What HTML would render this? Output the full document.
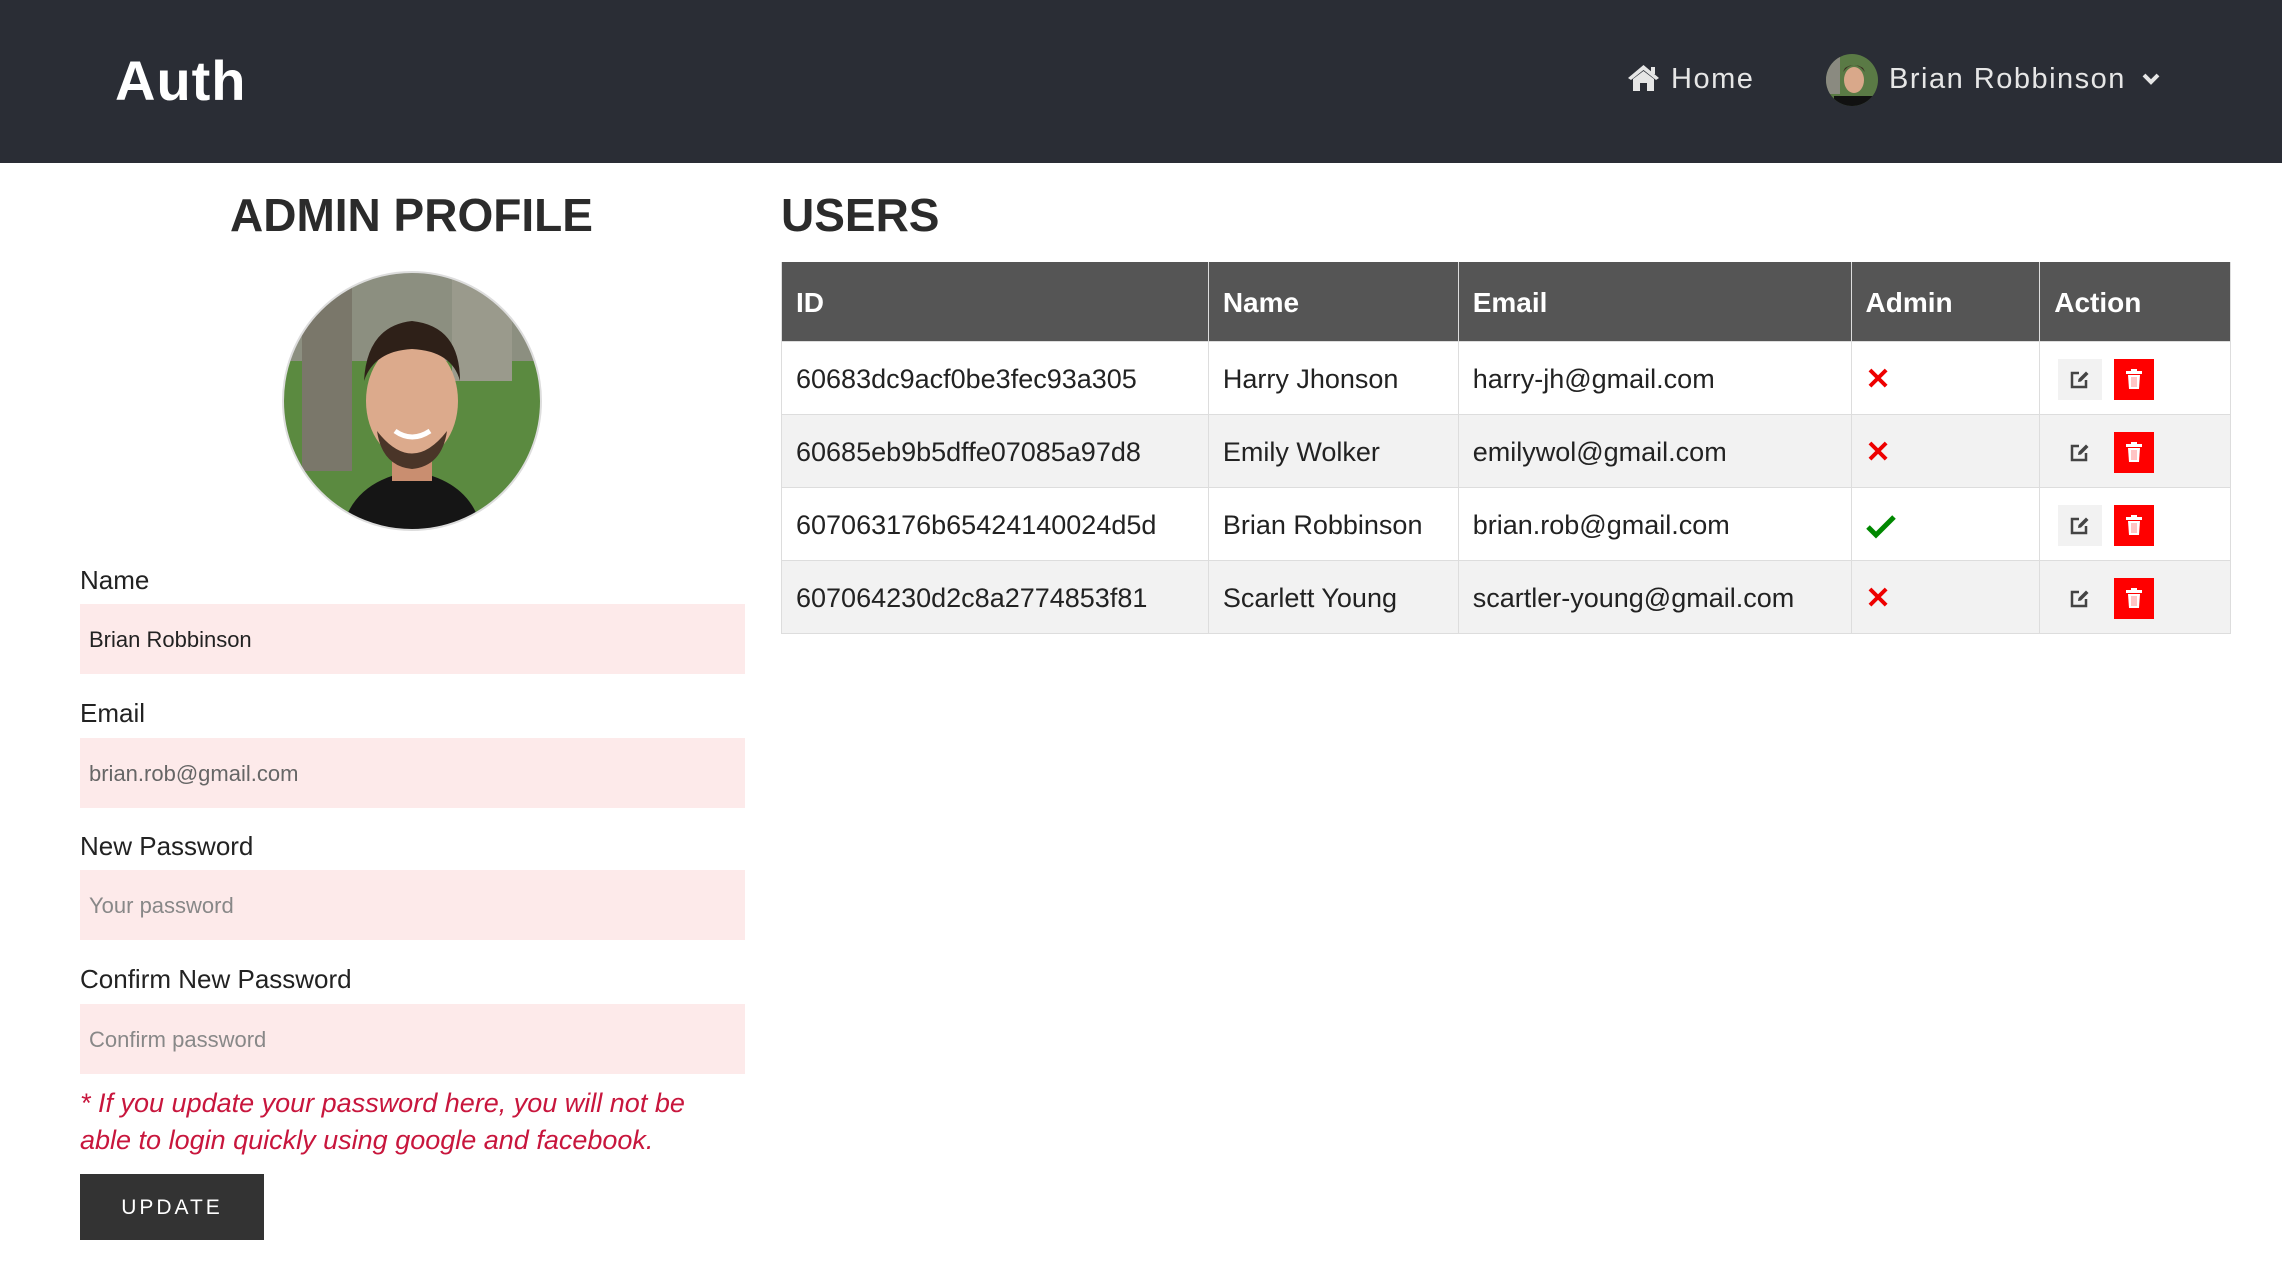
<!DOCTYPE html>
<html><head><meta charset="utf-8"><style>
*{box-sizing:border-box;margin:0;padding:0}
body{width:2282px;height:1269px;background:#fff;font-family:"Liberation Sans",sans-serif;color:#222;position:relative;overflow:hidden}
.nav{position:absolute;left:0;top:0;width:2282px;height:163px;background:#2a2d35}
.abs{position:absolute;white-space:nowrap}
.logo{left:115px;top:48px;font-size:56px;font-weight:bold;color:#fff;letter-spacing:1px}
.navt{color:#e6e6e6;font-size:29px;letter-spacing:1.5px;top:63px}
h2{position:absolute;font-size:46px;font-weight:bold;color:#2b2b2b;top:188px}
label{position:absolute;left:80px;font-size:26px;color:#222}
.inp{position:absolute;left:80px;width:665px;height:70px;background:#fdeaea;font-size:22px;padding-left:9px;line-height:72px;color:#777}
.note{position:absolute;left:80px;top:1085px;font-size:27px;font-style:italic;color:#c8163d;line-height:37px;width:640px}
.btn{position:absolute;left:80px;top:1174px;width:184px;height:66px;background:#333;color:#fff;font-size:21px;letter-spacing:3px;text-align:center;line-height:68px}
table{position:absolute;left:781px;top:262px;width:1450px;border-collapse:collapse;font-size:27px}
th{background:#555;color:#fff;text-align:left;height:79px;padding:4px 14px 0;font-size:28px;border:1px solid #ddd;border-top:none}
td{height:73px;padding:4px 14px 0;border:1px solid #ddd;white-space:nowrap}
tr:nth-child(odd) td{background:#f2f2f2}
.e{display:inline-block;width:44px;height:41px;background:#f2f2f2;vertical-align:middle;margin-left:4px;position:relative}
.d{display:inline-block;width:40px;height:41px;background:#f00;vertical-align:middle;margin-left:12px;position:relative}
</style></head><body>
<div class="nav"></div>
<div class="abs logo">Auth</div>
<svg class="abs" style="left:1627px;top:64px" width="33" height="28" viewBox="0 0 33 28"><path d="M16.5 1 L1 14 L4 16 L16.5 6 L29 16 L32 14 Z" fill="#e6e6e6"/><path d="M6 15 L16.5 7 L27 15 V27 H20 V19 H13 V27 H6 Z" fill="#e6e6e6"/><rect x="24" y="3" width="4" height="7" fill="#e6e6e6"/></svg>
<div class="abs navt" style="left:1671px">Home</div>
<svg class="abs" style="left:1826px;top:54px" width="52" height="52" viewBox="0 0 52 52"><defs><clipPath id="c1"><circle cx="26" cy="26" r="26"/></clipPath></defs><g clip-path="url(#c1)"><rect width="52" height="52" fill="#5a7a45"/><rect x="0" y="0" width="14" height="40" fill="#8a8a80"/><ellipse cx="28" cy="26" rx="10" ry="13" fill="#d9a88a"/><path d="M17 18 Q28 4 39 18 L37 14 Q28 8 19 14Z" fill="#3a2a20"/><rect x="8" y="42" width="40" height="12" fill="#111"/></g></svg>
<div class="abs navt" style="left:1889px">Brian Robbinson</div>
<svg class="abs" style="left:2142px;top:72px" width="18" height="14" viewBox="0 0 18 14"><path d="M2 3 L9 10 L16 3" stroke="#e6e6e6" stroke-width="4" fill="none"/></svg>

<h2 style="left:230px">ADMIN PROFILE</h2>
<h2 style="left:781px">USERS</h2>
<svg class="abs" style="left:282px;top:271px" width="260" height="260" viewBox="0 0 260 260"><defs><clipPath id="c2"><circle cx="130" cy="130" r="129"/></clipPath></defs><g clip-path="url(#c2)"><rect width="260" height="260" fill="#5b8a40"/><rect width="260" height="90" fill="#8c8f80"/><rect x="20" y="0" width="50" height="200" fill="#7a776a"/><rect x="170" y="0" width="60" height="110" fill="#9a9a8c"/><path d="M60 260 Q70 210 130 200 Q190 210 200 260Z" fill="#151515"/><rect x="110" y="170" width="40" height="40" fill="#c98e70"/><ellipse cx="130" cy="130" rx="46" ry="60" fill="#dcaa8c"/><path d="M82 110 Q85 55 130 50 Q178 55 178 110 Q170 80 130 78 Q92 80 82 110Z" fill="#2e2018"/><path d="M95 160 Q130 205 165 160 Q160 195 130 198 Q100 195 95 160Z" fill="#4a3528"/><path d="M113 160 Q130 172 148 160" stroke="#fff" stroke-width="5" fill="none"/></g><circle cx="130" cy="130" r="129" fill="none" stroke="#ddd" stroke-width="2"/></svg>

<label style="top:565px">Name</label>
<div class="inp" style="top:604px;color:#222">Brian Robbinson</div>
<label style="top:698px">Email</label>
<div class="inp" style="top:738px;color:#666">brian.rob@gmail.com</div>
<label style="top:831px">New Password</label>
<div class="inp" style="top:870px;color:#888">Your password</div>
<label style="top:964px">Confirm New Password</label>
<div class="inp" style="top:1004px;color:#888">Confirm password</div>
<div class="note">* If you update your password here, you will not be able to login quickly using google and facebook.</div>
<div class="btn">UPDATE</div>

<table>
<colgroup><col style="width:427px"><col style="width:250px"><col style="width:393px"><col style="width:189px"><col style="width:191px"></colgroup>
<tr><th>ID</th><th>Name</th><th>Email</th><th>Admin</th><th>Action</th></tr>
<tr><td>60683dc9acf0be3fec93a305</td><td>Harry Jhonson</td><td>harry-jh@gmail.com</td><td><span style="color:#e00;font-weight:bold;font-size:30px">✕</span></td><td><span class="e"><svg style="position:absolute;left:12px;top:11px" width="20" height="19" viewBox="0 0 20 19"><path d="M9 3H2V17H16V10" stroke="#444" stroke-width="2.5" fill="none"/><path d="M8 12L8.5 9L16 1.5L18.5 4L11 11.5Z" fill="#444"/></svg></span><span class="d"><svg style="position:absolute;left:12px;top:10px" width="16" height="20" viewBox="0 0 16 20"><rect x="0" y="2" width="16" height="3" fill="#fff"/><rect x="5" y="0" width="6" height="3" fill="#fff"/><path d="M2 6H14L13 20H3Z" fill="#fff"/><path d="M6 8V18M8 8V18M10 8V18" stroke="#f88" stroke-width="1"/></svg></span></td></tr>
<tr><td>60685eb9b5dffe07085a97d8</td><td>Emily Wolker</td><td>emilywol@gmail.com</td><td><span style="color:#e00;font-weight:bold;font-size:30px">✕</span></td><td><span class="e"><svg style="position:absolute;left:12px;top:11px" width="20" height="19" viewBox="0 0 20 19"><path d="M9 3H2V17H16V10" stroke="#444" stroke-width="2.5" fill="none"/><path d="M8 12L8.5 9L16 1.5L18.5 4L11 11.5Z" fill="#444"/></svg></span><span class="d"><svg style="position:absolute;left:12px;top:10px" width="16" height="20" viewBox="0 0 16 20"><rect x="0" y="2" width="16" height="3" fill="#fff"/><rect x="5" y="0" width="6" height="3" fill="#fff"/><path d="M2 6H14L13 20H3Z" fill="#fff"/><path d="M6 8V18M8 8V18M10 8V18" stroke="#f88" stroke-width="1"/></svg></span></td></tr>
<tr><td>607063176b65424140024d5d</td><td>Brian Robbinson</td><td>brian.rob@gmail.com</td><td><svg width="30" height="24" viewBox="0 0 30 24" style="vertical-align:middle"><path d="M2 12L10 20L28 2" stroke="#080" stroke-width="5" fill="none"/></svg></td><td><span class="e"><svg style="position:absolute;left:12px;top:11px" width="20" height="19" viewBox="0 0 20 19"><path d="M9 3H2V17H16V10" stroke="#444" stroke-width="2.5" fill="none"/><path d="M8 12L8.5 9L16 1.5L18.5 4L11 11.5Z" fill="#444"/></svg></span><span class="d"><svg style="position:absolute;left:12px;top:10px" width="16" height="20" viewBox="0 0 16 20"><rect x="0" y="2" width="16" height="3" fill="#fff"/><rect x="5" y="0" width="6" height="3" fill="#fff"/><path d="M2 6H14L13 20H3Z" fill="#fff"/><path d="M6 8V18M8 8V18M10 8V18" stroke="#f88" stroke-width="1"/></svg></span></td></tr>
<tr><td>607064230d2c8a2774853f81</td><td>Scarlett Young</td><td>scartler-young@gmail.com</td><td><span style="color:#e00;font-weight:bold;font-size:30px">✕</span></td><td><span class="e"><svg style="position:absolute;left:12px;top:11px" width="20" height="19" viewBox="0 0 20 19"><path d="M9 3H2V17H16V10" stroke="#444" stroke-width="2.5" fill="none"/><path d="M8 12L8.5 9L16 1.5L18.5 4L11 11.5Z" fill="#444"/></svg></span><span class="d"><svg style="position:absolute;left:12px;top:10px" width="16" height="20" viewBox="0 0 16 20"><rect x="0" y="2" width="16" height="3" fill="#fff"/><rect x="5" y="0" width="6" height="3" fill="#fff"/><path d="M2 6H14L13 20H3Z" fill="#fff"/><path d="M6 8V18M8 8V18M10 8V18" stroke="#f88" stroke-width="1"/></svg></span></td></tr>
</table>
</body></html>
